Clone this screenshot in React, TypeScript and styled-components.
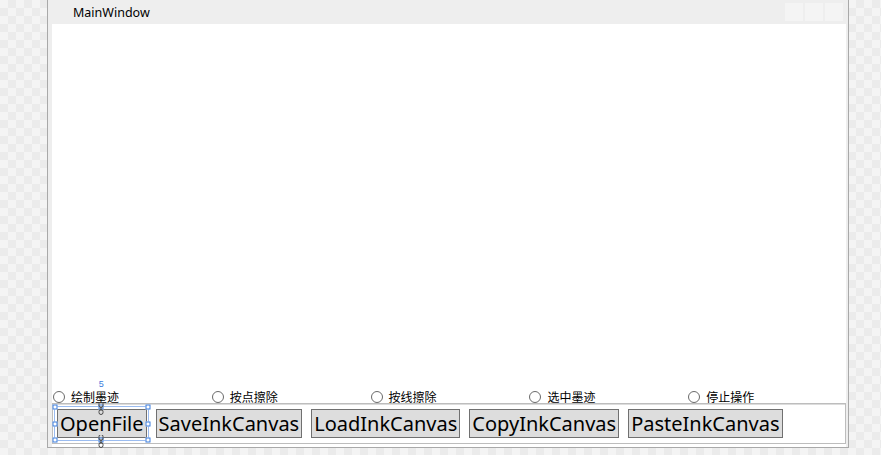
import React from "react";
import styled, { createGlobalStyle } from "styled-components";

const Global = createGlobalStyle`
  html, body {
    margin: 0;
    padding: 0;
    width: 881px;
    height: 455px;
    overflow: hidden;
    background-color: #f4f4f4;
    background-image:
      linear-gradient(45deg, #ebebeb 25%, transparent 25%, transparent 75%, #ebebeb 75%),
      linear-gradient(45deg, #ebebeb 25%, transparent 25%, transparent 75%, #ebebeb 75%);
    background-size: 16px 16px;
    background-position: 0 0, 8px 8px;
  }
  * { box-sizing: border-box; }
`;

const Page = styled.div`
  padding-left: 47px;
  height: 455px;
`;

const Window = styled.div`
  width: 802px;
  height: 448px;
  background: #eeeeee;
  border: 1px solid #a9a9a9;
  border-top: none;
  display: flex;
  flex-direction: column;
  padding: 0 2px 0 4px;
`;

const TitleBar = styled.div`
  height: 24px;
  display: flex;
  align-items: center;
  padding-left: 25px;
  padding-right: 3px;
  margin-left: -4px;
`;

const Title = styled.span`
  font-family: "Noto Sans", sans-serif;
  font-size: 12.5px;
  color: #000;
  flex: 1;
  padding-top: 1px;
`;

const CaptionButtons = styled.div`
  display: flex;
  gap: 2px;
  align-self: flex-start;
  margin-top: 3px;
`;

const CaptionButton = styled.div`
  width: 18px;
  height: 18px;
  background: #f4f4f4;
`;

const Content = styled.div`
  flex: 1;
  background: #ffffff;
  display: flex;
  flex-direction: column;
  padding-bottom: 3px;
`;

const InkArea = styled.div`
  flex: 1;
`;

const RadioRow = styled.div`
  display: grid;
  grid-template-columns: repeat(5, 1fr);
  height: 13px;
  align-items: center;
`;

const RadioItem = styled.label`
  display: flex;
  align-items: center;
  gap: 6px;
  padding-left: 1px;
  font-family: "Noto Sans CJK SC", "Noto Sans", sans-serif;
  font-size: 12px;
  color: #000;
  line-height: 13px;
`;

const RadioCircle = styled.span`
  width: 12px;
  height: 12px;
  border-radius: 50%;
  border: 1px solid #6a6a6a;
  background: #fff;
  flex: none;
`;

const Panel = styled.div`
  height: 41px;
  border: 1px solid #bdbdbd;
  box-shadow: inset 0 1px 0 #dcdcdc;
  display: flex;
  align-items: flex-start;
  padding: 5px 0 0 4px;
  gap: 9px;
`;

const ButtonWrap = styled.div`
  position: relative;
`;

const Button = styled.button`
  height: 29px;
  margin: 0;
  padding: 0 2px;
  background: #dddddd;
  border: 1px solid #707070;
  border-radius: 0;
  font-family: "Noto Sans", sans-serif;
  font-size: 20px;
  line-height: 27px;
  color: #000;
  white-space: nowrap;
`;

const Adorner = styled.div`
  position: absolute;
  left: -3px;
  top: -3px;
  right: -2px;
  bottom: -3px;
  border: 1px solid #9bbcf0;
  pointer-events: none;
`;

const Handle = styled.span<{ $x: string; $y: string }>`
  position: absolute;
  width: 5px;
  height: 5px;
  background: #fff;
  border: 1px solid #3b7ddd;
  left: ${(p) => p.$x};
  top: ${(p) => p.$y};
  transform: translate(-50%, -50%);
`;

const Link = styled.svg<{ $top: string }>`
  position: absolute;
  left: 50%;
  top: ${(p) => p.$top};
  transform: translateX(-50%);
`;

const MarginLabel = styled.span`
  position: absolute;
  left: 50%;
  top: -27px;
  transform: translateX(-50%);
  font-family: "Liberation Sans", sans-serif;
  font-size: 9px;
  color: #3b7ddd;
  line-height: 9px;
`;

const radios = ["绘制墨迹", "按点擦除", "按线擦除", "选中墨迹", "停止操作"];
const buttons = ["OpenFile", "SaveInkCanvas", "LoadInkCanvas", "CopyInkCanvas", "PasteInkCanvas"];

const handles: [string, string][] = [
  ["0%", "0%"], ["50%", "0%"], ["100%", "0%"],
  ["0%", "50%"], ["100%", "50%"],
  ["0%", "100%"], ["50%", "100%"], ["100%", "100%"],
];

const LinkIcon = ({ top }: { top: string }) => (
  <Link $top={top} width="7" height="13" viewBox="0 0 7 13">
    <path
      d="M1.5 1.5 a2 2 0 0 1 4 0 v2 a2 2 0 0 1 -4 0 z M1.5 9.5 a2 2 0 0 1 4 0 v1 a2 2 0 0 1 -4 0 z M3.5 4 v5"
      fill="none"
      stroke="#4a4a4a"
      strokeWidth="1"
    />
  </Link>
);

export default function App() {
  return (
    <>
      <Global />
      <Page>
        <Window>
          <TitleBar>
            <Title>MainWindow</Title>
            <CaptionButtons>
              <CaptionButton />
              <CaptionButton />
              <CaptionButton />
            </CaptionButtons>
          </TitleBar>
          <Content>
            <InkArea />
            <RadioRow>
              {radios.map((r) => (
                <RadioItem key={r}>
                  <RadioCircle />
                  {r}
                </RadioItem>
              ))}
            </RadioRow>
            <Panel>
              {buttons.map((b, i) => (
                <ButtonWrap key={b}>
                  <Button>{b}</Button>
                  {i === 0 && (
                    <Adorner>
                      <MarginLabel>5</MarginLabel>
                      {handles.map(([x, y], k) => (
                        <Handle key={k} $x={x} $y={y} />
                      ))}
                      <LinkIcon top="-5px" />
                      <LinkIcon top="28px" />
                    </Adorner>
                  )}
                </ButtonWrap>
              ))}
            </Panel>
          </Content>
        </Window>
      </Page>
    </>
  );
}
